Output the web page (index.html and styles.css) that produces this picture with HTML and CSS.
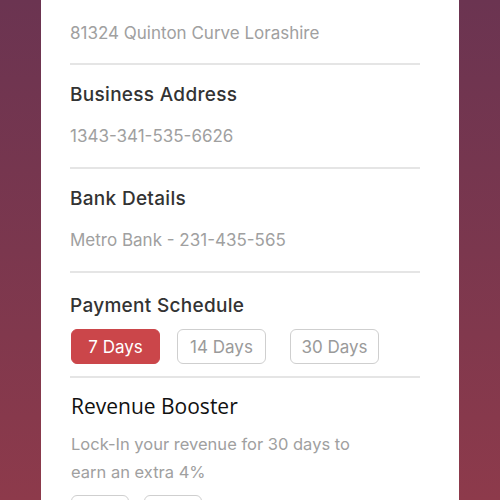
FILE: index.html
```html
<!DOCTYPE html>
<html>
<head>
<meta charset="utf-8">
<link rel="stylesheet" href="styles.css">
</head>
<body>
<div class="card">
  <div class="section first">
    <div class="value">81324 Quinton Curve Lorashire</div>
  </div>
  <div class="section">
    <div class="label">Business Address</div>
    <div class="value">1343-341-535-6626</div>
  </div>
  <div class="section">
    <div class="label">Bank Details</div>
    <div class="value">Metro Bank - 231-435-565</div>
  </div>
  <div class="section schedule">
    <div class="label">Payment Schedule</div>
    <div class="chips">
      <button class="chip active">7 Days</button>
      <button class="chip">14 Days</button>
      <button class="chip wide-gap">30 Days</button>
    </div>
  </div>
  <div class="section booster">
    <div class="label alt">Revenue Booster</div>
    <div class="desc">Lock-In your revenue for 30 days to earn an extra 4%</div>
    <div class="opts">
      <span class="opt"></span>
      <span class="opt"></span>
    </div>
  </div>
</div>
</body>
</html>
```
FILE: styles.css
```css
html, body {
  margin: 0;
  height: 100%;
}
body {
  background: linear-gradient(to bottom, #6b3451 0%, #7b374e 50%, #8d3a4b 100%);
  font-family: Inter, "Noto Sans", sans-serif;
  overflow: hidden;
}
.card {
  margin: 0 41px;
  background: #fff;
  padding: 0 39px 0 30px;
  min-height: 100%;
  box-sizing: border-box;
}
.section {
  border-bottom: 2px solid #e5e5e5;
  padding: 18px 0 19px 0;
  margin-left: -1px;
}
.section.first {
  padding-top: 21px;
  padding-bottom: 18px;
}
.label {
  font-size: 19px;
  line-height: 24px;
  color: #333;
  font-weight: 500;
  letter-spacing: 0.3px;
}
.label.alt {
  font-family: "Open Sans", sans-serif;
  font-weight: 400;
  font-size: 21px;
  letter-spacing: 0;
  color: #111;
}
.value {
  font-size: 17px;
  line-height: 24px;
  color: #a0a0a0;
  margin-top: 17px;
}
.section.first .value {
  margin-top: 0;
}
.schedule {
  padding-top: 21px;
  padding-bottom: 12px;
}
.chips {
  display: flex;
  margin-top: 11px;
  margin-left: 1px;
}
.chip {
  width: 89px;
  height: 35px;
  box-sizing: border-box;
  border: 1.5px solid #cfcfcf;
  border-radius: 6px;
  background: #fff;
  color: #9a9a9a;
  font-family: Inter, sans-serif;
  font-size: 17px;
  padding: 0;
  margin-right: 17px;
}
.chip.wide-gap {
  margin-left: 7px;
}
.chip.active {
  background: #cb464a;
  border-color: #cb464a;
  color: #fff;
}
.booster {
  border-bottom: none;
  padding-top: 16px;
  margin-left: 0;
}
.desc {
  font-size: 16.5px;
  line-height: 28px;
  color: #a0a0a0;
  margin-top: 12px;
  width: 290px;
}
.opts {
  display: flex;
  gap: 15px;
  margin-top: 9px;
}
.opt {
  width: 58px;
  height: 30px;
  border: 1.5px solid #cfcfcf;
  border-radius: 6px;
  box-sizing: border-box;
}
```
